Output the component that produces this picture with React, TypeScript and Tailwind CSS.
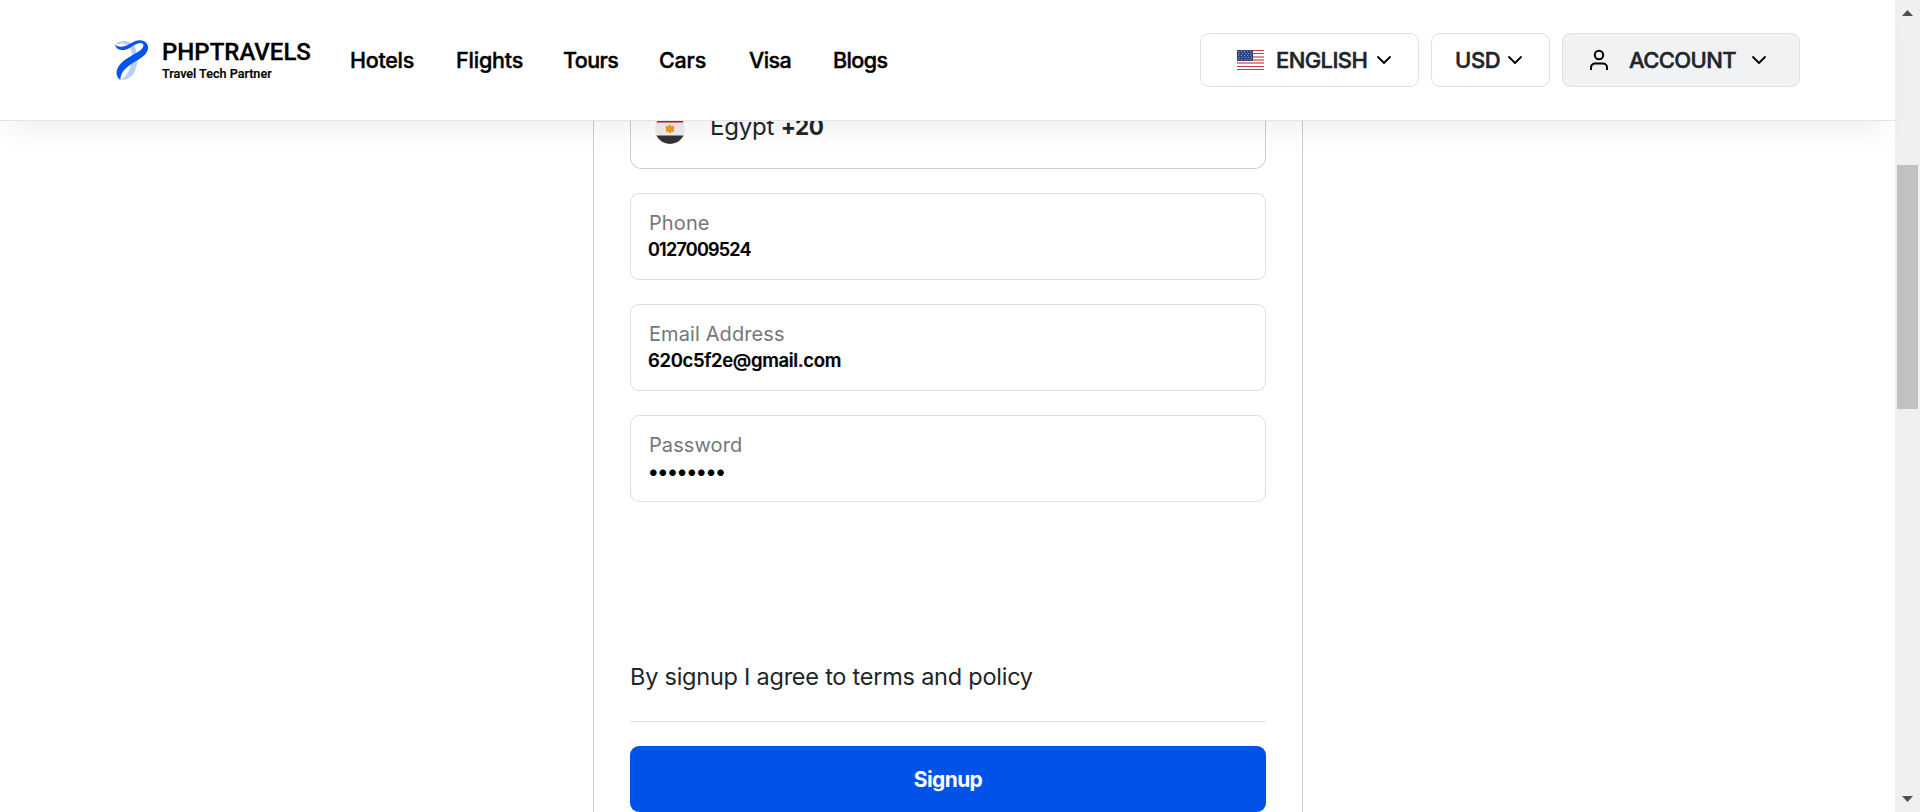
import React from "react";
import { ChevronDown } from "lucide-react";

const navItems = [
  { label: "Hotels", cls: "w-[106px] tracking-[-0.3px]" },
  { label: "Flights", cls: "w-[107px] tracking-[-0.2px]" },
  { label: "Tours", cls: "w-[96px] tracking-[-0.6px]" },
  { label: "Cars", cls: "w-[90px] tracking-[-0.2px]" },
  { label: "Visa", cls: "w-[84px] tracking-[-0.6px]" },
  { label: "Blogs", cls: "w-[60px] tracking-[-0.6px]" },
];

function LogoMark() {
  return (
    <svg viewBox="0 0 132 150" className="h-[50px] w-[44px]">
      <path d="M18 24C40 12 66 18 76 38C82 54 84 70 82 82C78 112 64 134 38 135L34 132C50 124 60 104 64 80C66 60 66 46 58 36C50 26 34 22 24 28Z" fill="#b5d0fb" />
      <path d="M15 27C20 36 34 37 48 32C64 26 76 14 92 16C110 18 118 32 113 46C106 66 80 76 60 90C40 104 32 116 31 135C18 126 16 110 26 94C40 72 68 62 88 48C100 40 104 30 96 25C86 20 74 30 60 38C42 50 18 48 15 27Z" fill="#0553ea" />
    </svg>
  );
}

function UsFlag() {
  return (
    <svg viewBox="0 0 27 20" className="h-5 w-[27px]" shapeRendering="crispEdges">
      <rect width="27" height="20" fill="#fff" />
      {[0, 3, 6, 9, 12, 16, 19].map((y) => (
        <rect key={y} y={y} width="27" height={y > 3 && y < 15 ? 2 : 1} fill={y > 3 && y < 15 ? "#dc8d94" : "#bf3a49"} />
      ))}
      <rect width="15.5" height="11" fill="#2f4580" />
      {[1, 3, 5, 7, 9].map((y) =>
        [1, 4, 7, 10, 13].map((x) => (
          <rect key={`${x}-${y}`} x={x + (y % 4 === 3 ? 1 : 0)} y={y} width="1" height="1" fill="#8c99bb" />
        )),
      )}
    </svg>
  );
}

function UserIcon() {
  return (
    <svg viewBox="0 0 24 24" className="size-6" fill="none" stroke="#000" strokeWidth="2">
      <circle cx="12" cy="7" r="4.2" />
      <path d="M4 22v-2.5a4 4 0 0 1 4-4h8a4 4 0 0 1 4 4V22" />
    </svg>
  );
}

function EgyptFlag() {
  return (
    <svg viewBox="0 0 30 30" className="size-[30px]">
      <defs>
        <clipPath id="round"><circle cx="15" cy="15" r="15" /></clipPath>
      </defs>
      <g clipPath="url(#round)">
        <rect width="30" height="30" fill="#eeeeee" />
        <rect width="30" height="8.5" fill="#ce1135" />
        <rect y="21.5" width="30" height="9" fill="#333333" />
        <path d="M11 11.500l2.500 1 .5-1.500h2l.5 1.500 2.500-1v6.500l-2.500-.5-.5 1.500h-2l-.5-1.500-2.500.5z" fill="#ff9811" />
      </g>
    </svg>
  );
}

function Field({ label, value, cls }: { label: string; value: string; cls: string }) {
  return (
    <div className="mt-6 h-[87px] rounded-[9px] border border-[#dee0e6] px-[17px] pt-4 leading-[26px]">
      <div className="pl-px text-[20px] leading-[27px] tracking-[0.1px] text-[#74777a]">{label}</div>
      <div className={cls}>{value}</div>
    </div>
  );
}

export default function App() {
  return (
    <div className="flex h-screen w-full overflow-hidden bg-white font-['Inter',sans-serif] text-[#212529]">
      <div className="flex min-w-0 flex-1 flex-col">
        <header className="relative z-10 flex h-[121px] shrink-0 items-center justify-between border-b border-[#e5e5e5] bg-white pr-[95px] pl-[110px] shadow-[0_20px_24px_-8px_rgba(0,0,0,0.055)]">
          <div className="flex items-center">
            <div className="flex w-[240px] items-center">
              <LogoMark />
              <div className="pl-2 font-['Roboto',sans-serif] font-medium text-black">
                <div className="text-[24px] leading-[26px] [-webkit-text-stroke:0.3px_black]">PHPTRAVELS</div>
                <div className="pt-px text-[12.6px] leading-[16px] [-webkit-text-stroke:0.2px_black]">Travel Tech Partner</div>
              </div>
            </div>
            <nav className="flex pt-px text-[21.5px] font-medium text-black [-webkit-text-stroke:0.4px_black]">
              {navItems.map((n) => (
                <a key={n.label} className={n.cls}>{n.label}</a>
              ))}
            </nav>
          </div>
          <div className="flex gap-3 text-[22px] font-medium [-webkit-text-stroke:0.5px_#212529]">
            <button className="flex h-[54px] w-[219px] items-center rounded-[9px] border border-[#dee0e6] pl-9">
              <UsFlag />
              <span className="w-[108px] pl-3 text-left tracking-[-0.6px]">ENGLISH</span>
              <ChevronDown className="size-6 text-black" strokeWidth={1.8} />
            </button>
            <button className="flex h-[54px] w-[119px] items-center rounded-[9px] border border-[#dee0e6] pl-[23px]">
              <span className="w-12 text-left tracking-[-0.4px]">USD</span>
              <ChevronDown className="size-6 text-black" strokeWidth={1.8} />
            </button>
            <button className="flex h-[54px] w-[238px] items-center rounded-[9px] border border-[#dee0e6] bg-[#f1f2f4] pl-6">
              <UserIcon />
              <span className="w-[136px] pl-[18px] text-left tracking-[-0.6px]">ACCOUNT</span>
              <ChevronDown className="size-6 text-black" strokeWidth={1.8} />
            </button>
          </div>
        </header>

        <main className="-mt-[39px] ml-[593px] w-[710px] flex-1 border-x border-[#cccccc] px-9">
          <div className="flex h-[87px] items-center rounded-[11px] border border-[#cccccc] pt-[7px] pl-6">
            <EgyptFlag />
            <div className="pb-1 pl-[25px] text-[24px] tracking-[-0.2px]">
              Egypt <strong className="text-[22.5px] font-bold tracking-[-0.5px]">+20</strong>
            </div>
          </div>
          <Field label="Phone" value="0127009524" cls="text-[18px] font-semibold tracking-[-0.75px] text-black [-webkit-text-stroke:0.2px_black]" />
          <Field label="Email Address" value="620c5f2e@gmail.com" cls="text-[18.5px] leading-[25px] font-semibold tracking-[-0.35px] text-black [-webkit-text-stroke:0.2px_black]" />
          <Field label="Password" value="••••••••" cls="text-[21px] font-semibold tracking-[-0.95px] text-black" />
          <p className="mt-[157px] text-[23.5px] leading-9 tracking-[-0.24px]">By signup I agree to terms and policy</p>
          <hr className="mt-[26px] border-[#e4e5e5]" />
          <button className="mt-6 h-[66px] w-full rounded-[9px] bg-[#0052e9] pt-[2px] text-[21px] font-bold tracking-[-0.6px] text-white">Signup</button>
        </main>
      </div>

      <aside className="flex w-[25px] shrink-0 flex-col items-center bg-[#f0f0f0] py-[10px]">
        <svg viewBox="0 0 11 6" className="h-[6px] w-[11px]"><path d="M0 6L5.500 0L11 6z" fill="#505050" /></svg>
        <div className="mt-[149px] h-[244px] w-[21px] bg-[#c1c1c1]" />
        <svg viewBox="0 0 11 6" className="mt-auto h-[6px] w-[11px]"><path d="M0 0L5.500 6L11 0z" fill="#505050" /></svg>
      </aside>
    </div>
  );
}
